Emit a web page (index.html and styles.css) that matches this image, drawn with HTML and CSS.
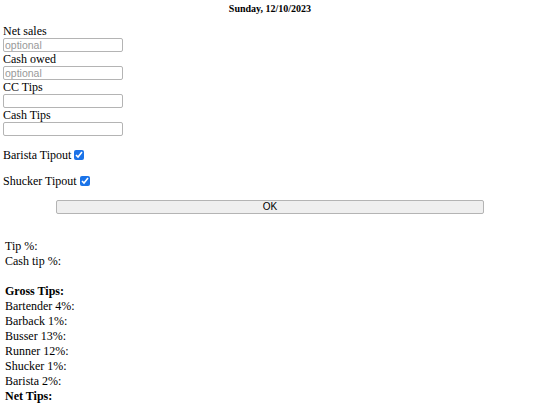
FILE: index.html
```
<!DOCTYPE html>
<html>
<head>
<meta charset="utf-8">
<link rel="stylesheet" href="styles.css">
</head>
<body>
<div class="date">Sunday, 12/10/2023</div>
<form class="form">
  <label class="lbl">Net sales</label>
  <input class="field" type="text" placeholder="optional">
  <label class="lbl">Cash owed</label>
  <input class="field" type="text" placeholder="optional">
  <label class="lbl">CC Tips</label>
  <input class="field" type="text">
  <label class="lbl">Cash Tips</label>
  <input class="field" type="text">
  <p class="check-row">Barista Tipout <input class="check" type="checkbox" checked></p>
  <p class="check-row">Shucker Tipout <input class="check" type="checkbox" checked></p>
  <button class="ok" type="button">OK</button>
</form>
<div class="results">
  <div class="line">Tip %:</div>
  <div class="line">Cash tip %:</div>
  <div class="line spacer"></div>
  <div class="line bold">Gross Tips:</div>
  <div class="line">Bartender 4%:</div>
  <div class="line">Barback 1%:</div>
  <div class="line">Busser 13%:</div>
  <div class="line">Runner 12%:</div>
  <div class="line">Shucker 1%:</div>
  <div class="line">Barista 2%:</div>
  <div class="line bold">Net Tips:</div>
</div>
</body>
</html>
```
FILE: styles.css
```
html, body {
  margin: 0;
  padding: 0;
  background: #fff;
}
body {
  padding: 3px 3px;
  font-family: "Liberation Serif", "Times New Roman", serif;
  font-size: 12px;
  line-height: 14px;
  color: #000;
}
.date {
  text-align: center;
  font-weight: bold;
  font-size: 10px;
  line-height: 12px;
  margin: 0 0 9px;
}
.form {
  display: flex;
  flex-direction: column;
  align-items: flex-start;
}
.lbl {
  display: block;
  height: 14px;
}
.field {
  box-sizing: border-box;
  width: 120px;
  height: 14px;
  margin: 0;
  padding: 0 1px;
  border: 1px solid #b4b4b4;
  border-radius: 2px;
  font-family: "Liberation Sans", Arial, sans-serif;
  font-size: 10.5px;
  background: #fff;
}
.field::placeholder {
  color: #999;
}
.check-row {
  margin: 12px 0 0;
  display: flex;
  align-items: center;
  height: 14px;
}
.check {
  width: 10px;
  height: 10px;
  margin: 0 0 0 3px;
  accent-color: #1a73e8;
}
.ok {
  align-self: center;
  box-sizing: border-box;
  width: 80%;
  height: 14px;
  margin: 12px 0 0;
  padding: 0;
  border: 1px solid #b4b4b4;
  border-radius: 2px;
  background: #efefef;
  font-family: "Liberation Sans", Arial, sans-serif;
  font-size: 10px;
  line-height: 12px;
  color: #000;
}
.results {
  margin-top: 25px;
  padding-left: 2px;
}
.line {
  height: 15px;
  line-height: 15px;
}
.bold {
  font-weight: bold;
}
```
